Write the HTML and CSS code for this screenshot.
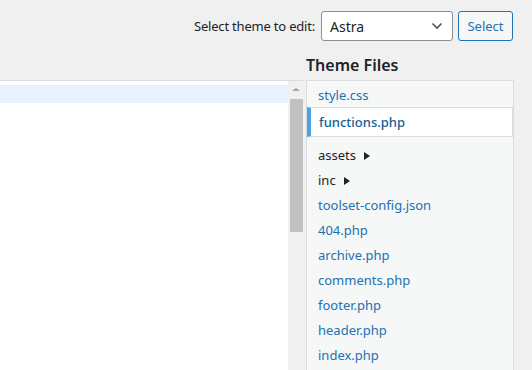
FILE: index.html
```html
<!DOCTYPE html>
<html>
    <head>
        <title>Edit Themes</title>
        <meta charset="utf-8" />
        <link rel="stylesheet" href="styles.css">
    </head>
    <body>
        <div class="theme-picker">
            <label class="picker-label" for="theme">Select theme to edit:</label>
            <div class="select-box">
                <span class="select-value">Astra</span>
                <svg class="chevron" width="12" height="8" viewBox="0 0 12 8">
                    <path d="M1.5 1.5 L6 6 L10.5 1.5" fill="none" stroke="#50575e" stroke-width="1.6" />
                </svg>
            </div>
            <button class="btn">Select</button>
        </div>
        <div class="main">
            <div class="editor">
                <div class="code">
                    <div class="active-line"></div>
                </div>
                <div class="scrollbar">
                    <div class="arrow"></div>
                    <div class="thumb"></div>
                </div>
            </div>
            <div class="sidebar">
                <h2 class="files-title">Theme Files</h2>
                <ul class="files">
                    <li class="file">style.css</li>
                    <li class="file current">functions.php</li>
                    <li class="folder">assets <span class="tri"></span></li>
                    <li class="folder">inc <span class="tri"></span></li>
                    <li class="file">toolset-config.json</li>
                    <li class="file">404.php</li>
                    <li class="file">archive.php</li>
                    <li class="file">comments.php</li>
                    <li class="file">footer.php</li>
                    <li class="file">header.php</li>
                    <li class="file">index.php</li>
                </ul>
            </div>
        </div>
    </body>
</html>
```

FILE: styles.css
```css
html,
body {
    margin: 0;
    padding: 0;
    background: #f0f0f1;
    font-family: 'Segoe UI', 'Noto Sans', 'Open Sans', sans-serif;
    font-size: 13px;
    color: #1d2327;
    height: 370px;
    overflow: hidden;
}

.theme-picker {
    display: flex;
    justify-content: flex-end;
    align-items: center;
    padding: 11px 19px 0 0;
    height: 30px;
}

.picker-label {
    margin-right: 6px;
    letter-spacing: -0.2px;
}

.select-box {
    box-sizing: border-box;
    width: 132px;
    height: 30px;
    border: 1px solid #8c8f94;
    border-radius: 3px;
    background: #fff;
    display: flex;
    align-items: center;
    justify-content: space-between;
    padding: 0 9px 0 8px;
    font-size: 14px;
}

.btn {
    box-sizing: border-box;
    margin-left: 5px;
    width: 55px;
    height: 30px;
    border: 1px solid #2271b1;
    border-radius: 3px;
    background: #f6f7f7;
    color: #2271b1;
    font: inherit;
    font-size: 13px;
    padding: 0;
}

.main {
    display: flex;
    align-items: flex-start;
}

.editor {
    display: flex;
    width: 303px;
    height: 290px;
    margin-top: 39px;
    border-top: 1px solid #dcdcde;
    background: #fff;
}

.code {
    flex: 1;
    padding-top: 4px;
}

.active-line {
    height: 18px;
    background: #e8f2ff;
}

.scrollbar {
    width: 15px;
    background: #f0f0f0;
    display: flex;
    flex-direction: column;
    align-items: flex-end;
}

.arrow {
    width: 0;
    height: 0;
    margin: 7px 3px 8px 0;
    border-left: 4px solid transparent;
    border-right: 4px solid transparent;
    border-bottom: 3px solid #a3a3a3;
}

.thumb {
    width: 13px;
    height: 133px;
    background: #c1c1c1;
}

.sidebar {
    width: 208px;
    margin-left: 3px;
}

.files-title {
    margin: 0;
    padding: 10px 0 0 0;
    height: 29px;
    font-size: 16px;
    font-weight: 600;
    line-height: 28px;
}

.files {
    list-style: none;
    margin: 0;
    padding: 2px 0 0 0;
    height: 287px;
    overflow: hidden;
    background: #f6f7f7;
    border: 1px solid #dcdcde;
    border-bottom: none;
}

.files li {
    height: 25px;
    line-height: 25px;
    padding-left: 11px;
}

.file {
    color: #2271b1;
}

.files .current {
    box-sizing: border-box;
    height: 30px;
    line-height: 28px;
    margin: -1px 0 6px 0;
    background: #fff;
    border: 1px solid #dcdcde;
    border-left: 4px solid #4aa3df;
    padding-left: 8px;
    color: #135e96;
    font-weight: 500;
}

.folder {
    color: #1d2327;
}

.tri {
    display: inline-block;
    margin-left: 5px;
    width: 0;
    height: 0;
    border-top: 4px solid transparent;
    border-bottom: 4px solid transparent;
    border-left: 6px solid #1d2327;
    vertical-align: 0;
}
```
